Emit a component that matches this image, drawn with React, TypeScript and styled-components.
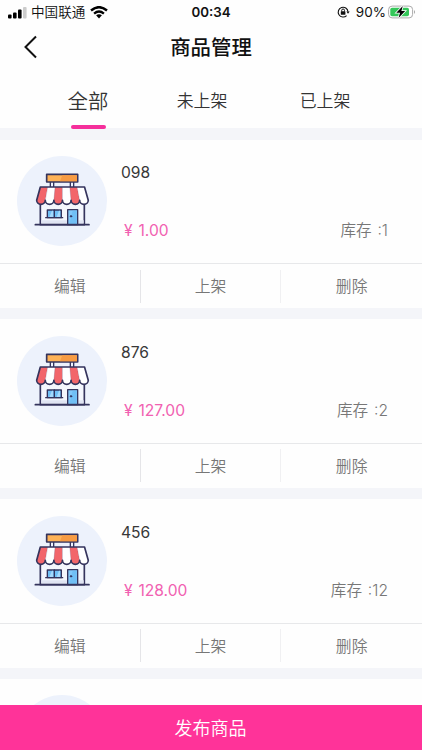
import React from "react";
import styled, { createGlobalStyle } from "styled-components";

const GlobalStyle = createGlobalStyle`
  * { box-sizing: border-box; }
  body {
    margin: 0;
    background: #f4f5f9;
    font-family: Inter, "Noto Sans CJK SC", sans-serif;
    color: #333;
  }
`;

const Screen = styled.div`
  width: 422px;
  height: 750px;
  display: flex;
  flex-direction: column;
  overflow: hidden;
`;

const StatusBar = styled.div`
  height: 24px;
  flex: none;
  display: grid;
  grid-template-columns: 1fr auto 1fr;
  align-items: center;
  padding: 0 6px 0 8px;
  background: #fefefe;
  color: #111;
  font-size: 14px;
  line-height: 24px;
`;

const StatusGroup = styled.div<{ $end?: boolean }>`
  display: flex;
  align-items: center;
  justify-content: ${(p) => (p.$end ? "flex-end" : "flex-start")};
  gap: 5px;
`;

const Carrier = styled.span`
  font-size: 13.6px;
  font-weight: 350;
  margin-left: -1px;
`;

const Clock = styled.span`
  font-size: 13.3px;
  font-weight: 600;
  margin-left: -2px;
`;

const Percent = styled.span`
  font-size: 13.5px;
  margin: 0 -3px 0 1px;
`;

const NavBar = styled.header`
  height: 46px;
  flex: none;
  display: grid;
  grid-template-columns: 60px 1fr 60px;
  align-items: center;
  background: #fefefe;
`;

const BackButton = styled.button`
  border: 0;
  background: none;
  padding: 0 0 0 23px;
  display: flex;
`;

const Title = styled.h1`
  margin: 0;
  padding-top: 2px;
  text-align: center;
  font-size: 20.4px;
  line-height: 44px;
  font-weight: 500;
  color: #111;
`;

const Tabs = styled.nav`
  height: 58px;
  flex: none;
  display: grid;
  grid-template-columns: repeat(3, 123px);
  justify-content: center;
  background: #fefefe;
`;

const Tab = styled.button<{ $active?: boolean }>`
  border: 0;
  padding: 0;
  background: none;
  display: flex;
  flex-direction: column;
  align-items: center;
  justify-content: flex-start;
  font: inherit;
  font-weight: 350;
  font-size: ${(p) => (p.$active ? 20.4 : 16.9)}px;
  line-height: ${(p) => (p.$active ? 46 : 48)}px;
  padding-top: ${(p) => (p.$active ? 9 : 7)}px;
  padding-right: ${(p) => (p.$active ? 0 : 18)}px;
  color: #333;
  height: 58px;

  &::after {
    content: "";
    flex: none;
    width: 35px;
    height: 3.5px;
    border-radius: 2px;
    background: ${(p) => (p.$active ? "#f52f9b" : "transparent")};
  }
`;

const List = styled.main`
  flex: 1;
  min-height: 0;
  overflow: hidden;
  padding-top: 11.5px;
`;

const Card = styled.article`
  height: 168.8px;
  margin-bottom: 11px;
  background: #fefefe;
`;

const Product = styled.div`
  height: 124.5px;
  display: flex;
  padding: 16.5px 34px 0 17px;
  border-bottom: 1px solid #e7e8ea;
`;

const Avatar = styled.div`
  flex: none;
  width: 90px;
  height: 90px;
  border-radius: 50%;
  background: #edf2fc;
`;

const Info = styled.div`
  flex: 1;
  height: 87px;
  display: flex;
  flex-direction: column;
  justify-content: space-between;
  padding: 5px 0 0 14px;
  font-size: 15.6px;
  line-height: 24px;
`;

const Name = styled.div`
  color: #383838;
`;

const Meta = styled.div`
  display: flex;
  justify-content: space-between;
  white-space: pre;
`;

const Price = styled.span`
  color: #f161b1;
  padding-left: 3px;
  word-spacing: 1.5px;
`;

const Stock = styled.span`
  color: #777;
  font-weight: 350;
  word-spacing: 1.5px;
`;

const Actions = styled.div`
  height: 44.3px;
  display: grid;
  grid-template-columns: repeat(3, 1fr);
  align-items: center;
`;

const Action = styled.button`
  height: 33px;
  padding: 0 0 1px;
  border: 0;
  border-right: 1px solid #e5e5e8;
  background: none;
  color: #777;
  font: inherit;
  font-weight: 350;
  font-size: 15.8px;

  &:nth-child(2) { border-right-color: #f0f0f2; }
  &:last-child { border-right: 0; }
`;

const Publish = styled.button`
  flex: none;
  height: 45.5px;
  border: 0;
  padding: 0 1px 1px 0;
  background: #ff3399;
  color: #fff;
  font: inherit;
  font-weight: 350;
  font-size: 18px;
`;

const INK = "#35345d";

function Shop() {
  const stripes = [0, 1, 2, 3, 4, 5];
  return (
    <svg width="90" height="90" viewBox="-39 -36 270 270" stroke={INK} strokeWidth="5" strokeLinejoin="round" strokeLinecap="round">
      <path d="M31 98H163V170H31Z" fill="#f4f6fd" />
      <path d="M34 157H161V167H34Z" fill="#dfe4f2" stroke="none" />
      <path d="M61 42V56M71 42V56M121 42V56M131 42V56" strokeWidth="4" />
      <path d="M50 19H143V42H50Z" fill="#ffb357" />
      <path d="M97 21.5H141V39.5H90Z" fill="#f79b43" stroke="none" />
      {stripes.map((i) => {
        const top = 31 + i * 22.1;
        const bottom = 20 + i * 25.8;
        return (
          <path
            key={i}
            d={`M${top} 57H${top + 22.1}L${bottom + 25.8} 97a12.9 12 0 0 1 -25.8 0Z`}
            fill={i % 2 ? "#ffffff" : "#f2666b"}
            stroke="none"
          />
        );
      })}
      <path
        d="M31 57H163.6L174.8 97a12.9 12 0 0 1-25.8 0a12.9 12 0 0 1-25.8 0a12.9 12 0 0 1-25.8 0a12.9 12 0 0 1-25.8 0a12.9 12 0 0 1-25.8 0a12.9 12 0 0 1-25.8 0Z"
        fill="none"
      />
      <path d="M53 59L45.8 97M75 59L71.6 97M97.4 59V97M119.4 59L123.2 97M141.5 59L149 97" strokeWidth="1" strokeOpacity=".55" />
      <path d="M52 126H94V149H52Z" fill="#70bff5" strokeWidth="4" />
      <path d="M66 128L58 147H69V128M87 128L80 147H90V128" fill="#a6dafd" stroke="none" />
      <path d="M73 126V149M47 149H98" strokeWidth="4" />
      <path d="M113 125H143V170H113Z" fill="#83c9fa" strokeWidth="4" />
      <path d="M128 128H140V167H118Z" fill="#70bff5" stroke="none" />
      <circle cx="123" cy="145" r="2.2" fill={INK} strokeWidth="3" />
      <path d="M16 170H177" />
    </svg>
  );
}

function Signal() {
  return (
    <svg width="19" height="13" viewBox="0 0 19 13">
      <rect x="0" y="8.5" width="3.6" height="4" rx="1" fill="#000" />
      <rect x="5" y="6.5" width="3.6" height="6" rx="1" fill="#000" />
      <rect x="10" y="3.5" width="3.6" height="9" rx="1" fill="#000" />
      <rect x="15" y="1" width="3.6" height="11.5" rx="1" fill="#ccc" />
    </svg>
  );
}

function Wifi() {
  return (
    <svg width="18" height="13" viewBox="0 0 18 13" fill="none" stroke="#000" strokeWidth="2.4">
      <path d="M1 4.5Q9-2.2 17 4.5" />
      <path d="M4.1 7.6Q9 3.5 13.9 7.6" />
      <path d="M6.1 9.3Q9 7.1 11.9 9.3L9 12.4Z" fill="#000" stroke="none" />
    </svg>
  );
}

function RotationLock() {
  return (
    <svg width="13" height="12" viewBox="0 0 13 12" fill="none" stroke="#111" strokeWidth="1.1">
      <path d="M9.6 9.6A4.9 4.9 0 1 1 11 5.7" />
      <path d="M9.4 5.4H12.7L11 7.8Z" fill="#111" stroke="none" />
      <rect x="3.8" y="5.3" width="4.6" height="3.4" rx=".5" fill="#111" stroke="none" />
      <path d="M4.7 5.5V4.4a1.4 1.4 0 0 1 2.8 0V5.5" strokeWidth="1" />
    </svg>
  );
}

function Battery() {
  return (
    <svg width="28" height="14" viewBox="0 0 28 14">
      <rect x=".6" y="1.1" width="24" height="11.8" rx="3.5" fill="#fff" stroke="#aaa" />
      <rect x="2.3" y="2.8" width="18.7" height="8.4" rx="1.7" fill="#34c759" />
      <path d="M26 5.1Q28.2 7 26 8.9Z" fill="#aaa" />
      <path d="M14.8 1L8.3 7.8H12L10.5 13L17.2 6.1H13.4Z" fill="#000" stroke="#fff" strokeWidth="1.6" paintOrder="stroke" />
    </svg>
  );
}

const products = [
  { name: "098", price: "1.00", stock: 1 },
  { name: "876", price: "127.00", stock: 2 },
  { name: "456", price: "128.00", stock: 12 },
];

export default function App() {
  return (
    <>
      <GlobalStyle />
      <Screen>
        <StatusBar>
          <StatusGroup>
            <Signal />
            <Carrier>中国联通</Carrier>
            <Wifi />
          </StatusGroup>
          <Clock>00:34</Clock>
          <StatusGroup $end>
            <RotationLock />
            <Percent>90%</Percent>
            <Battery />
          </StatusGroup>
        </StatusBar>
        <NavBar>
          <BackButton aria-label="返回">
            <svg width="15" height="24" viewBox="0 0 15 24" fill="none" stroke="#111" strokeWidth="2">
              <path d="M13 1.5L2.5 12L13 22.5" />
            </svg>
          </BackButton>
          <Title>商品管理</Title>
        </NavBar>
        <Tabs>
          <Tab $active>全部</Tab>
          <Tab>未上架</Tab>
          <Tab>已上架</Tab>
        </Tabs>
        <List>
          {products.map((p) => (
            <Card key={p.name}>
              <Product>
                <Avatar>
                  <Shop />
                </Avatar>
                <Info>
                  <Name>{p.name}</Name>
                  <Meta>
                    <Price>¥ {p.price}</Price>
                    <Stock>库存 :{p.stock}</Stock>
                  </Meta>
                </Info>
              </Product>
              <Actions>
                <Action>编辑</Action>
                <Action>上架</Action>
                <Action>删除</Action>
              </Actions>
            </Card>
          ))}
          <Card>
            <Product>
              <Avatar>
                <Shop />
              </Avatar>
            </Product>
          </Card>
        </List>
        <Publish>发布商品</Publish>
      </Screen>
    </>
  );
}
